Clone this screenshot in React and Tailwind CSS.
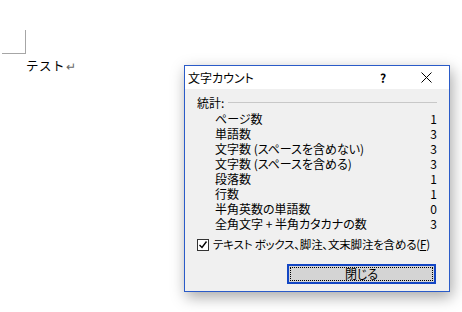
import React from "react";

const rows = [
  ["ページ数", "1"],
  ["単語数", "3"],
  ["文字数 (スペースを含めない)", "3"],
  ["文字数 (スペースを含める)", "3"],
  ["段落数", "1"],
  ["行数", "1"],
  ["半角英数の単語数", "0"],
  ["全角文字 + 半角カタカナの数", "3"],
];

const ui = "font-['Noto_Sans_CJK_JP','Noto_Sans',sans-serif] [font-feature-settings:'palt']";

export default function App() {
  return (
    <div className="relative w-[462px] h-[312px] overflow-hidden bg-white text-black font-['Noto_Sans_CJK_JP','Noto_Sans',sans-serif]">
      {/* document page */}
      <div className="ml-[2px] mt-[30px] w-[24px] h-[24px] border-r border-b border-[#a6a6a6]" />
      <div className="ml-[26px] mt-[4px] flex items-center text-[12.5px] leading-[16px]">
        <span className="tracking-[0.5px]">テスト</span>
        <span className="ml-[1px] text-[12px] text-[#666]">↵</span>
      </div>

      {/* word count dialog */}
      <div className={`absolute left-[184px] top-[65px] w-[266px] h-[227px] border border-[#2a5bc8] bg-[#f0f0f0] shadow-[2px_5px_14px_rgba(0,0,0,0.35)] flex flex-col text-[12px] ${ui}`}>
        <div className="h-[23px] bg-white flex items-center pl-[3px]">
          <span className="flex-1">文字カウント</span>
          <span className="w-[16px] text-center font-bold mr-[30px]">?</span>
          <svg width="11" height="11" viewBox="0 0 11 11" className="mr-[17px]">
            <path d="M0.5 0.5 L10.5 10.5 M10.5 0.5 L0.5 10.5" stroke="#000" strokeWidth="1" />
          </svg>
        </div>

        <div className="flex flex-col pt-[6px] pl-[12px] pr-[12px]">
          <div className="h-[15px] flex items-center leading-[15px]">
            <span>統計:</span>
            <div className="flex-1 ml-[4px] h-px bg-[#c8c8c8]" />
          </div>
          <div className="mt-[1px] pl-[18px] flex flex-col">
            {rows.map(([label, n]) => (
              <div key={label} className="h-[15px] flex items-center justify-between leading-[15px]">
                <span>{label}</span>
                <span>{n}</span>
              </div>
            ))}
          </div>
          <div className="mt-[6px] h-[15px] flex items-center leading-[15px] whitespace-nowrap">
            <div className="shrink-0 w-[12px] h-[12px] border border-[#333] bg-white flex items-center justify-center">
              <svg width="10" height="10" viewBox="0 0 10 10">
                <path d="M1.5 5 L4 7.5 L8.5 1.5" fill="none" stroke="#000" strokeWidth="1.4" />
              </svg>
            </div>
            <span className="ml-[4px] text-[11.5px] tracking-[-0.2px]">
              テキスト ボックス、脚注、文末脚注を含める(<span className="underline">F</span>)
            </span>
          </div>
          <div className="mt-[12px] flex justify-end pr-[1px]">
            <div className="w-[149px] h-[20px] border-2 border-[#1346c4] bg-[#d4d4d4] p-[1px]">
              <div className="w-full h-full border border-dotted border-black flex items-center justify-center leading-[14px]">
                閉じる
              </div>
            </div>
          </div>
        </div>
      </div>
    </div>
  );
}
